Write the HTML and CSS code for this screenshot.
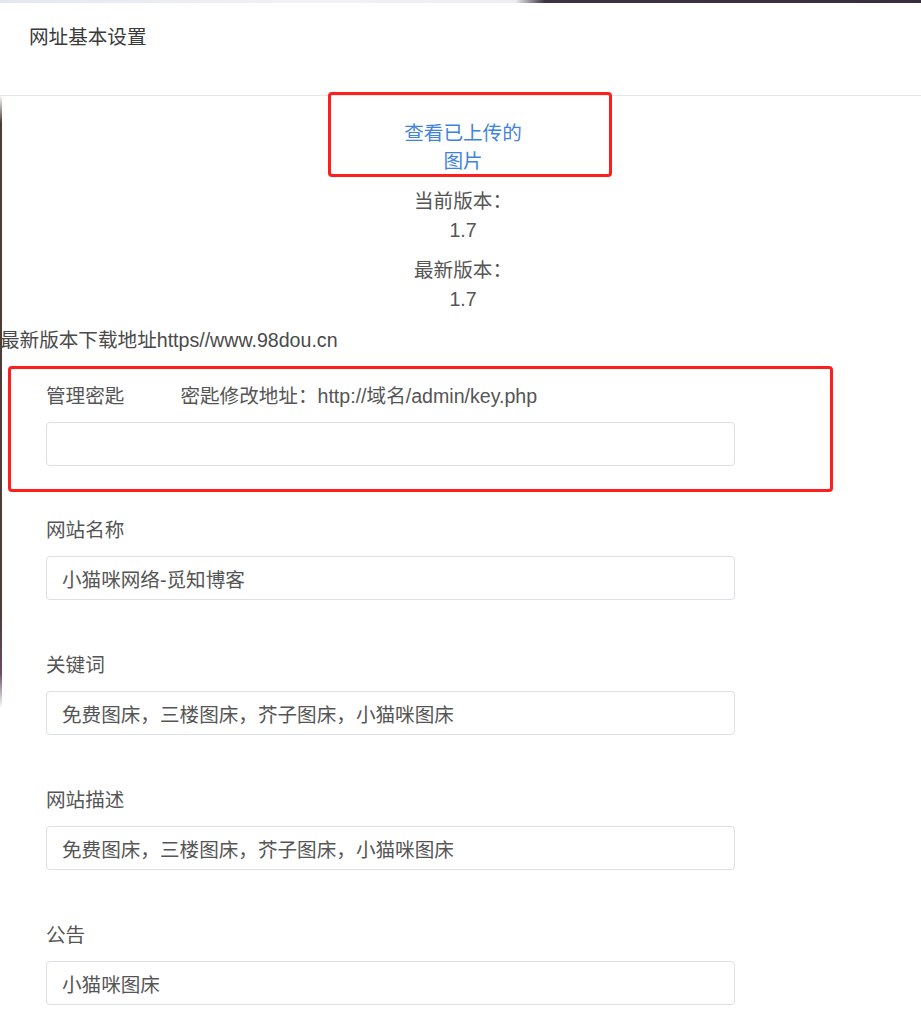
FILE: index.html
```html
<!DOCTYPE html>
<html lang="zh-CN">
<head>
<meta charset="utf-8">
<title>网址基本设置</title>
<link rel="stylesheet" href="styles.css">
</head>
<body>
<div class="top-strip"></div>
<div class="page">
  <div class="card-header">网址基本设置</div>
  <div class="center-col">
    <div class="link-wrap">
      <span class="mark mark-link"></span>
      <a class="link" href="#">查看已上传的图片</a>
    </div>
    <p class="ver">当前版本：1.7</p>
    <p class="ver">最新版本：1.7</p>
  </div>
  <p class="download">最新版本下载地址https//www.98dou.cn</p>
  <div class="form">
    <div class="group boxed">
      <label class="label">管理密匙<span class="hint">密匙修改地址：http://域名/admin/key.php</span></label>
      <input class="field" type="text" value="">
    </div>
    <div class="group">
      <label class="label">网站名称</label>
      <input class="field" type="text" value="小猫咪网络-觅知博客">
    </div>
    <div class="group">
      <label class="label">关键词</label>
      <input class="field" type="text" value="免费图床，三楼图床，芥子图床，小猫咪图床">
    </div>
    <div class="group">
      <label class="label">网站描述</label>
      <input class="field" type="text" value="免费图床，三楼图床，芥子图床，小猫咪图床">
    </div>
    <div class="group">
      <label class="label">公告</label>
      <input class="field" type="text" value="小猫咪图床">
    </div>
  </div>
</div>
</body>
</html>
```

FILE: styles.css
```css
html, body {
  margin: 0;
  padding: 0;
  background: #ffffff;
}
body {
  font-family: "Liberation Sans", "Noto Sans CJK SC", sans-serif;
  font-size: 19.6px;
  color: #555555;
  overflow: hidden;
  height: 1024px;
}
.top-strip {
  height: 3px;
  background: linear-gradient(to right, #e3e7ef 0, #f1f2f6 300px, #eeeff3 515px, #3e3243 545px, #3a2e3e 100%);
}
.page {
  background: linear-gradient(to bottom, rgba(0,0,0,0) 92px, #4d3b35 120px, #4d3b35 610px, #6b4a68 670px, rgba(255,255,255,0) 705px) no-repeat 0 0 / 2px 100%;
  min-height: 1021px;
}
.card-header {
  padding: 20px 29px 44px;
  line-height: 28px;
  color: #3a3a3a;
  border-bottom: 1px solid #e8e8e8;
}
.center-col {
  width: 124px;
  margin-left: 401px;
  text-align: center;
}
.link-wrap {
  position: relative;
  margin-top: 23px;
  line-height: 28px;
}
.mark {
  position: absolute;
  border: 3px solid #ff1d1d;
  border-radius: 4px;
  box-sizing: border-box;
}
.mark-link {
  left: -73px;
  top: -27px;
  width: 284px;
  height: 85px;
}
.link {
  color: #3f82e0;
  text-decoration: none;
}
.ver {
  margin: 12px 0 0;
  line-height: 28.5px;
}
.download {
  margin: 13px 0 0;
  line-height: 28px;
  color: #4a4a4a;
}
.form {
  padding: 12px 0 0;
}
.group {
  margin: 0 0 51px 46px;
  display: flex;
  flex-direction: column;
  gap: 12px;
}
.group.boxed {
  margin: 0 88px 24px 8px;
  padding: 13px 0 23px 35px;
  border: 3px solid #ff1d1d;
  border-radius: 4px;
}
.label {
  display: block;
  line-height: 28px;
}
.hint {
  margin-left: 56px;
}
.field {
  box-sizing: border-box;
  width: 689px;
  height: 44px;
  margin: 0;
  padding: 0 15px;
  border: 1px solid #dcdfe6;
  border-radius: 4px;
  background: #ffffff;
  font: inherit;
  color: #555555;
  outline: none;
}
```
